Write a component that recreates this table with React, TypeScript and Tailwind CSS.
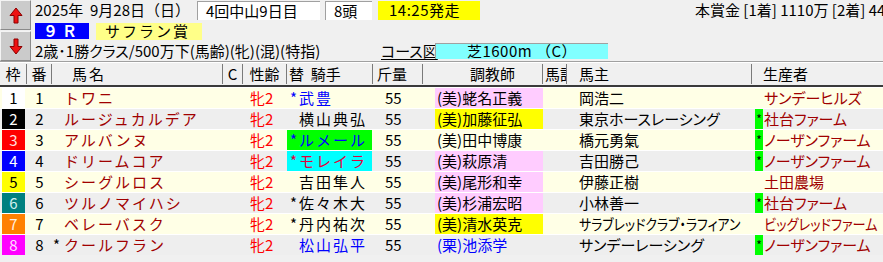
import React from "react";

type Horse = {
  waku: number;
  no: number;
  mark: string;
  name: string;
  jMark: string;
  jockey: string;
  jText: string;
  jBg: string;
  trainer: string;
  tText: string;
  tBg: string;
  owner: string;
  ownerCls: string;
  bMark: boolean;
  breeder: string;
  breederCls: string;
};

const wakuStyle: Record<number, string> = {
  1: "bg-white text-black",
  2: "bg-black text-white",
  3: "bg-[#ff0000] text-[#ffe0e0]",
  4: "bg-[#0000ff] text-white",
  5: "bg-[#ffff00] text-black",
  6: "bg-[#008080] text-[#d0f0f0]",
  7: "bg-[#ff8000] text-[#fff0e0]",
  8: "bg-[#ff00ff] text-[#ffe0ff]",
};

const horses: Horse[] = [
  { waku: 1, no: 1, mark: "", name: "トワニ", jMark: "*", jockey: "武豊", jText: "text-[#0000ff]", jBg: "", trainer: "(美)蛯名正義", tText: "text-black", tBg: "bg-[#ffccff]", owner: "岡浩二", ownerCls: "", bMark: false, breeder: "サンデーヒルズ", breederCls: "" },
  { waku: 2, no: 2, mark: "", name: "ルージュカルデア", jMark: "", jockey: "横山典弘", jText: "text-black", jBg: "", trainer: "(美)加藤征弘", tText: "text-black", tBg: "bg-[#ffff00]", owner: "東京ホースレーシング", ownerCls: "", bMark: true, breeder: "社台ファーム", breederCls: "" },
  { waku: 3, no: 3, mark: "", name: "アルバンヌ", jMark: "*", jockey: "ルメール", jText: "text-[#0000ff]", jBg: "bg-[#00ff00]", trainer: "(美)田中博康", tText: "text-black", tBg: "", owner: "橋元勇氣", ownerCls: "", bMark: true, breeder: "ノーザンファーム", breederCls: "" },
  { waku: 4, no: 4, mark: "", name: "ドリームコア", jMark: "*", jockey: "モレイラ", jText: "text-[#e0003c]", jBg: "bg-[#00ffff]", trainer: "(美)萩原清", tText: "text-black", tBg: "bg-[#ffccff]", owner: "吉田勝己", ownerCls: "", bMark: true, breeder: "ノーザンファーム", breederCls: "" },
  { waku: 5, no: 5, mark: "", name: "シーグルロス", jMark: "", jockey: "吉田隼人", jText: "text-black", jBg: "", trainer: "(美)尾形和幸", tText: "text-black", tBg: "bg-[#ffccff]", owner: "伊藤正樹", ownerCls: "", bMark: false, breeder: "土田農場", breederCls: "" },
  { waku: 6, no: 6, mark: "", name: "ツルノマイハシ", jMark: "*", jockey: "佐々木大", jText: "text-black", jBg: "", trainer: "(美)杉浦宏昭", tText: "text-black", tBg: "bg-[#ffccff]", owner: "小林善一", ownerCls: "", bMark: true, breeder: "社台ファーム", breederCls: "" },
  { waku: 7, no: 7, mark: "", name: "ベレーバスク", jMark: "*", jockey: "丹内祐次", jText: "text-black", jBg: "", trainer: "(美)清水英克", tText: "text-black", tBg: "bg-[#ffff00]", owner: "サラブレッドクラブ・ラフィアン", ownerCls: "origin-left scale-x-[0.86]", bMark: false, breeder: "ビッグレッドファーム", breederCls: "origin-left scale-x-[0.88]" },
  { waku: 8, no: 8, mark: "*", name: "クールフラン", jMark: "", jockey: "松山弘平", jText: "text-[#0000ff]", jBg: "", trainer: "(栗)池添学", tText: "text-[#0000ff]", tBg: "", owner: "サンデーレーシング", ownerCls: "", bMark: true, breeder: "ノーザンファーム", breederCls: "" },
];

function ArrowButton({ down }: { down?: boolean }) {
  return (
    <div className="flex h-[30px] w-[31px] items-center justify-center border border-t-[#f4f4f4] border-l-[#f4f4f4] border-r-[#8a8a8a] border-b-[#8a8a8a] bg-[#cbcbcb]">
      <svg width="14" height="17" viewBox="0 0 14 17" className={down ? "rotate-180" : ""}>
        <path d="M7 1 L13 8.5 L9 8.5 L9 16 L5 16 L5 8.5 L1 8.5 Z" fill="#ee1111" stroke="#8a0000" strokeWidth="1" strokeLinejoin="round" />
      </svg>
    </div>
  );
}

function HeaderCell({ className, children }: { className: string; children?: React.ReactNode }) {
  return (
    <div className={`flex h-[20px] shrink-0 items-center overflow-hidden whitespace-nowrap border-r border-[#7a7a7a] leading-[20px] ${className}`}>
      {children}
    </div>
  );
}

export default function App() {
  return (
    <div className="h-[262px] w-[883px] overflow-hidden bg-[#f0f0f0] font-['Noto_Sans_CJK_JP','Noto_Sans',sans-serif] text-[15px] leading-[20px] text-black">
      {/* race info */}
      <div className="flex h-[62px] border-b border-[#a0a0a0]">
        <div className="flex w-[31px] shrink-0 flex-col gap-px">
          <ArrowButton />
          <ArrowButton down />
        </div>
        <div className="flex flex-1 flex-col overflow-hidden pl-[4px]">
          <div className="flex h-[20px] items-center whitespace-nowrap">
            <span className="w-[162px] shrink-0">2025年&nbsp;&nbsp;9月28日（日）</span>
            <span className="flex h-[19px] w-[123px] shrink-0 items-center border-t border-l border-[#a0a0a0] bg-white pl-[8px]">4回中山9日目</span>
            <span className="ml-[5px] flex h-[19px] w-[47px] shrink-0 items-center border-t border-l border-[#a0a0a0] bg-white pl-[8px]">8頭</span>
            <span className="ml-[6px] flex h-[19px] w-[102px] shrink-0 items-center bg-[#ffff00] pl-[11px] tracking-[0.5px]">14:25発走</span>
            <span className="ml-[215px] shrink-0 [font-feature-settings:'palt']">本賞金 [1着] 1110万 [2着] 440万 [3着] 280万</span>
          </div>
          <div className="flex h-[20px] items-center pt-[2px]">
            <span className="flex h-[16px] w-[54px] items-center justify-center bg-[#0000ff] font-bold tracking-[4px] text-white">９Ｒ</span>
            <span className="ml-[7px] flex h-[17px] w-[106px] items-center bg-[#ffff88] pl-[9px] tracking-[2px]">サフラン賞</span>
          </div>
          <div className="flex h-[21px] items-center whitespace-nowrap">
            <span className="w-[346px] shrink-0 [font-feature-settings:'palt']">2歳･1勝クラス/500万下(馬齢)(牝)(混)(特指)</span>
            <span className="w-[54px] shrink-0 underline underline-offset-2 [font-feature-settings:'palt']">コース図</span>
            <span className="flex h-[16px] w-[173px] shrink-0 items-center justify-center border-t border-l border-[#a0a0a0] bg-[#80ffff] tracking-[0.5px]">芝1600m （C）</span>
          </div>
        </div>
      </div>
      <div className="h-px bg-white" />

      {/* table header */}
      <div className="flex h-[24px] items-center border-b-2 border-[#3a3a3a]">
        <HeaderCell className="w-[27px] justify-center">枠</HeaderCell>
        <HeaderCell className="w-[25px] justify-center">番</HeaderCell>
        <HeaderCell className="w-[171px] pl-[20px] tracking-[2px]">馬名</HeaderCell>
        <HeaderCell className="w-[20px] justify-center">C</HeaderCell>
        <HeaderCell className="w-[44px] justify-center">性齢</HeaderCell>
        <HeaderCell className="w-[86px] pl-[2px]">替&nbsp;&nbsp;騎手</HeaderCell>
        <HeaderCell className="w-[50px] pl-[4px]">斤量</HeaderCell>
        <HeaderCell className="w-[120px] pl-[47px]">調教師</HeaderCell>
        <HeaderCell className="w-[24px] pl-[2px]">馬記</HeaderCell>
        <HeaderCell className="w-[185px] pl-[12px]">馬主</HeaderCell>
        <div className="flex h-[20px] flex-1 items-center pl-[11px]">生産者</div>
      </div>

      {/* rows */}
      <div className="flex flex-col gap-px bg-white pt-px">
        {horses.map((h, i) => (
          <div key={h.no} className={`flex h-[20px] whitespace-nowrap ${i % 2 === 0 ? "bg-[#ffffe6]" : "bg-[#eeeeee]"}`}>
            <div className="flex w-[27px] shrink-0 justify-center px-[2px]">
              <span className={`flex w-full justify-center ${wakuStyle[h.waku]}`}>{h.waku}</span>
            </div>
            <div className="w-[25px] shrink-0 text-center">{h.no}</div>
            <div className="flex w-[171px] shrink-0 overflow-hidden text-[#a00000]">
              <span className="w-[12px] shrink-0 pl-[1px] text-black">{h.mark}</span>
              <span className="tracking-[2px]">{h.name}</span>
            </div>
            <div className="w-[20px] shrink-0" />
            <div className="w-[44px] shrink-0 pl-[7px] text-[#ff0000]">牝2</div>
            <div className="w-[86px] shrink-0 overflow-hidden pr-[1px]">
              <div className={`flex h-full ${h.jBg} ${h.jText}`}>
                <span className="w-[12px] shrink-0 pl-[3px]">{h.jMark}</span>
                <span className="tracking-[2px]">{h.jockey}</span>
              </div>
            </div>
            <div className="w-[50px] shrink-0 pl-[12px]">55</div>
            <div className="w-[120px] shrink-0 overflow-hidden pl-[12px]">
              <div className={`h-full pl-[2px] ${h.tBg} ${h.tText}`}>{h.trainer}</div>
            </div>
            <div className="w-[24px] shrink-0" />
            <div className="w-[185px] shrink-0 overflow-hidden pl-[12px] [font-feature-settings:'palt']">
              <div className={h.ownerCls}>{h.owner}</div>
            </div>
            <div className="flex min-w-0 flex-1 pl-[3px] text-[#a00000] [font-feature-settings:'palt']">
              <span className={`mr-px w-[8px] shrink-0 text-center text-[12px] text-black ${h.bMark ? "bg-[#00ff00]" : ""}`}>{h.bMark ? "*" : ""}</span>
              <span className={h.breederCls}>{h.breeder}</span>
            </div>
          </div>
        ))}
      </div>
    </div>
  );
}
